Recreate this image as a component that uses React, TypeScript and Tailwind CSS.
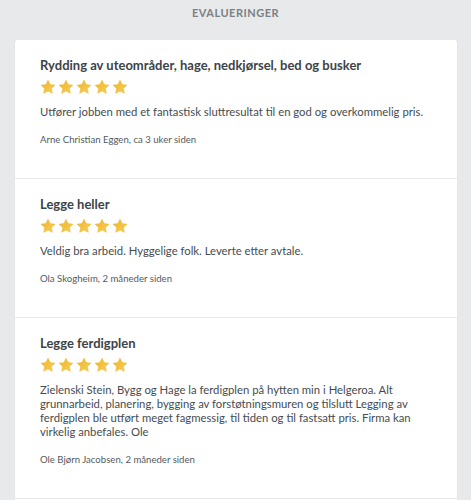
import React from "react";

const reviews = [
  {
    title: "Rydding av uteområder, hage, nedkjørsel, bed og busker",
    text: "Utfører jobben med et fantastisk sluttresultat til en god og overkommelig pris.",
    author: "Arne Christian Eggen, ca 3 uker siden",
  },
  {
    title: "Legge heller",
    text: "Veldig bra arbeid. Hyggelige folk. Leverte etter avtale.",
    author: "Ola Skogheim, 2 måneder siden",
  },
  {
    title: "Legge ferdigplen",
    text: "Zielenski Stein, Bygg og Hage la ferdigplen på hytten min i Helgeroa. Alt grunnarbeid, planering, bygging av forstøtningsmuren og tilslutt Legging av ferdigplen ble utført meget fagmessig, til tiden og til fastsatt pris. Firma kan virkelig anbefales. Ole",
    author: "Ole Bjørn Jacobsen, 2 måneder siden",
  },
];

const Star = () => (
  <svg width="16" height="16" viewBox="0 0 24 24">
    <defs>
      <linearGradient id="starGrad" x1="0" y1="0" x2="1" y2="1">
        <stop offset="0%" stopColor="#eeb12e" />
        <stop offset="100%" stopColor="#f8d155" />
      </linearGradient>
    </defs>
    <path
      d="M12 1.8l3.1 6.6 7.2.9-5.3 5 1.4 7.1L12 17.9l-6.4 3.5 1.4-7.1-5.3-5 7.2-.9z"
      fill="url(#starGrad)"
      stroke="#f0bd3a"
      strokeWidth="1"
      strokeLinejoin="round"
    />
  </svg>
);

const App = () => {
  return (
    <div className="min-h-screen bg-[#e8e9eb] font-['Lato',sans-serif]">
      {/* header */}
      <h2 className="pt-[6px] text-center text-[11px] leading-[14px] font-bold tracking-[0.5px] text-[#7b8085]">
        EVALUERINGER
      </h2>
      {/* reviews card */}
      <div className="mt-[20px] ml-[15px] mr-[14px] bg-white rounded-[3px] shadow-[0_1px_2px_rgba(0,0,0,0.05)]">
        {reviews.map((r) => (
          <div key={r.title} className="px-[25px] pt-[16px] pb-[32px] border-b border-[#e6e8ea]">
            <h3 className="text-[13px] leading-[18px] font-bold text-[#3d4348]">{r.title}</h3>
            <div className="mt-[5px] flex gap-[2px]">
              {[0, 1, 2, 3, 4].map((i) => (
                <Star key={i} />
              ))}
            </div>
            <p className="mt-[10px] text-[11.3px] leading-[14px] text-[#464c51]">{r.text}</p>
            <p className="mt-[14px] text-[9.6px] leading-[13px] text-[#545a5f]">{r.author}</p>
          </div>
        ))}
        <div className="h-[40px]" />
      </div>
    </div>
  );
};

export default App;
